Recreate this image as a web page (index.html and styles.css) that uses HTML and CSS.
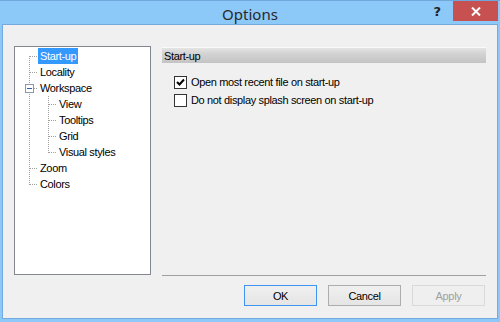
FILE: index.html
```html
<!DOCTYPE html>
<html lang="en">
<head>
<meta charset="UTF-8">
<meta name="viewport" content="width=device-width, initial-scale=1.0">
<title>Options</title>
<link rel="stylesheet" href="styles.css">
</head>
<body>
<div class="window">
    <div class="titlebar">
        <span></span>
        <span class="title">Options</span>
        <div class="controls">
            <span class="help">?</span>
            <span class="close">
                <svg width="10" height="9" viewBox="0 0 10 9"><path d="M1 0.5 L9 8.5 M9 0.5 L1 8.5" stroke="#fff" stroke-width="2"/></svg>
            </span>
        </div>
    </div>
    <div class="client">
        <div class="main">
            <div class="tree">
                <svg class="tree-lines" width="135" height="227" shape-rendering="crispEdges">
                    <g stroke="#a0a0a0" stroke-width="1" stroke-dasharray="1 1" fill="none">
                        <line x1="14.5" y1="9" x2="14.5" y2="138"/>
                        <line x1="15" y1="9.5" x2="22" y2="9.5"/>
                        <line x1="15" y1="25.5" x2="22" y2="25.5"/>
                        <line x1="19" y1="41.5" x2="22" y2="41.5"/>
                        <line x1="15" y1="121.5" x2="22" y2="121.5"/>
                        <line x1="15" y1="137.5" x2="22" y2="137.5"/>
                        <line x1="33.5" y1="49" x2="33.5" y2="106"/>
                        <line x1="34" y1="57.5" x2="42" y2="57.5"/>
                        <line x1="34" y1="73.5" x2="42" y2="73.5"/>
                        <line x1="34" y1="89.5" x2="42" y2="89.5"/>
                        <line x1="34" y1="105.5" x2="42" y2="105.5"/>
                    </g>
                    <rect x="10.5" y="37.5" width="8" height="8" fill="#fff" stroke="#8e99a6"/>
                    <line x1="12" y1="41.5" x2="17" y2="41.5" stroke="#2d5fa8"/>
                </svg>
                <div class="node root"><span class="label selected">Start-up</span></div>
                <div class="node root"><span class="label">Locality</span></div>
                <div class="node root"><span class="label">Workspace</span></div>
                <div class="node child"><span class="label">View</span></div>
                <div class="node child"><span class="label">Tooltips</span></div>
                <div class="node child"><span class="label">Grid</span></div>
                <div class="node child"><span class="label">Visual styles</span></div>
                <div class="node root"><span class="label">Zoom</span></div>
                <div class="node root"><span class="label">Colors</span></div>
            </div>
            <div class="page">
                <div class="page-header">Start-up</div>
                <div class="options">
                    <div class="check">
                        <span class="box">
                            <svg width="11" height="11" viewBox="0 0 11 11"><path d="M2 5 L4.5 7.5 L9 2.5" stroke="#000" stroke-width="2" fill="none"/></svg>
                        </span>
                        <span>Open most recent file on start-up</span>
                    </div>
                    <div class="check">
                        <span class="box"></span>
                        <span>Do not display splash screen on start-up</span>
                    </div>
                </div>
                <div class="separator"></div>
            </div>
        </div>
        <div class="buttons">
            <button class="button default">OK</button>
            <button class="button">Cancel</button>
            <button class="button disabled">Apply</button>
        </div>
    </div>
</div>
</body>
</html>
```

FILE: styles.css
```css
body {
    margin: 0;
    background-color: #8cc8f8;
    font-family: "Liberation Sans", Arial, sans-serif;
    font-size: 11px;
    letter-spacing: -0.35px;
    color: #000;
}
.window {
    width: 500px;
    height: 322px;
    box-sizing: border-box;
    background-color: #8cc8f8;
    border-top: 1px solid #6fa6dc;
    padding: 0 2px 3px;
    display: flex;
    flex-direction: column;
}
.titlebar {
    height: 23px;
    display: grid;
    grid-template-columns: 1fr auto 1fr;
    align-items: start;
}
.title {
    font-family: "Noto Sans", "Open Sans", sans-serif;
    font-size: 15px;
    letter-spacing: 0;
    color: #2a2a2a;
    line-height: 26px;
}
.controls {
    display: flex;
    justify-content: flex-end;
    align-items: flex-start;
}
.help {
    font-family: "DejaVu Sans", sans-serif;
    font-weight: bold;
    font-size: 13px;
    letter-spacing: 0;
    color: #222;
    line-height: 21px;
    margin-right: 12px;
}
.close {
    width: 45px;
    height: 20px;
    background-color: #c75050;
    display: flex;
    justify-content: center;
    align-items: center;
}
.client {
    flex: 1;
    background-color: #f0f0f0;
    border: 1px solid #76a9dc;
    padding: 21px 11px 0;
    display: flex;
    flex-direction: column;
}
.main {
    display: flex;
    gap: 11px;
    height: 230px;
}
.tree {
    position: relative;
    width: 137px;
    height: 229px;
    box-sizing: border-box;
    background-color: #fff;
    border: 1px solid #828790;
    padding-top: 1px;
}
.tree-lines {
    position: absolute;
    left: 0;
    top: 0;
}
.node {
    position: relative;
    height: 16px;
    line-height: 16px;
    display: flex;
}
.node.root {
    padding-left: 23px;
}
.node.child {
    padding-left: 42px;
}
.label {
    padding: 0 2px;
}
.label.selected {
    background-color: #3399ff;
    color: #fff;
}
.page {
    width: 324px;
    display: flex;
    flex-direction: column;
}
.page-header {
    margin-top: 1px;
    height: 16px;
    line-height: 16px;
    padding-left: 2px;
    background: linear-gradient(#e4e4e4, #d2d2d2 40%, #c4c4c4);
    border-top: 1px solid #fafafa;
    box-sizing: border-box;
}
.options {
    margin-top: 11px;
    padding-left: 12px;
}
.check {
    height: 18px;
    display: flex;
    align-items: flex-start;
    gap: 4px;
    line-height: 16px;
}
.box {
    margin-top: 2px;
    width: 13px;
    height: 13px;
    box-sizing: border-box;
    border: 1px solid #333;
    background-color: #fff;
    display: flex;
    justify-content: center;
    align-items: center;
}
.separator {
    margin-top: auto;
    height: 1px;
    background-color: #a0a0a0;
}
.buttons {
    margin-top: 9px;
    display: flex;
    justify-content: flex-end;
    gap: 11px;
    padding-right: 1px;
}
.button {
    width: 73px;
    height: 21px;
    font-family: "Liberation Sans", Arial, sans-serif;
    font-size: 11px;
    letter-spacing: -0.35px;
    color: #000;
    border: 1px solid #adadad;
    background: linear-gradient(#f0f0f0, #e5e5e5);
    padding: 0;
}
.button.default {
    border-color: #3c95f0;
}
.button.disabled {
    border-color: #d9d9d9;
    background: #efefef;
    color: #a0a0a0;
}
```
